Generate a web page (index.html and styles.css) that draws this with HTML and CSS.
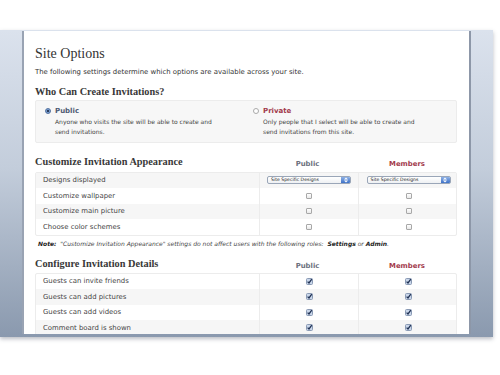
FILE: index.html
```html
<!DOCTYPE html>
<html>
<head>
<meta charset="utf-8">
<link rel="stylesheet" href="styles.css">
</head>
<body>
<div class="window">
  <div class="content">
    <h1 class="title">Site Options</h1>
    <p class="intro">The following settings determine which options are available across your site.</p>

    <h2 class="heading">Who Can Create Invitations?</h2>
    <div class="choice-panel">
      <div class="choice">
        <span class="radio radio-on"></span>
        <div class="choice-body">
          <div class="choice-title t-public">Public</div>
          <p class="choice-desc">Anyone who visits the site will be able to create and<br>send invitations.</p>
        </div>
      </div>
      <div class="choice">
        <span class="radio"></span>
        <div class="choice-body">
          <div class="choice-title t-private">Private</div>
          <p class="choice-desc">Only people that I select will be able to create and<br>send invitations from this site.</p>
        </div>
      </div>
    </div>

    <div class="cols section-head">
      <h2 class="heading">Customize Invitation Appearance</h2>
      <span class="col-head t-public-h">Public</span>
      <span class="col-head t-private">Members</span>
    </div>
    <div class="table table-a">
      <div class="cols row">
        <span class="label">Designs displayed</span>
        <span class="cell"><span class="select"><span class="select-text">Site Specific Designs</span><span class="select-arrow"><svg width="6" height="6" viewBox="0 0 6 6"><path d="M1 2.4 L3 0.6 L5 2.4Z M1 3.6 L3 5.4 L5 3.6Z" fill="#fff"/></svg></span></span></span>
        <span class="cell"><span class="select"><span class="select-text">Site Specific Designs</span><span class="select-arrow"><svg width="6" height="6" viewBox="0 0 6 6"><path d="M1 2.4 L3 0.6 L5 2.4Z M1 3.6 L3 5.4 L5 3.6Z" fill="#fff"/></svg></span></span></span>
      </div>
      <div class="cols row">
        <span class="label">Customize wallpaper</span>
        <span class="cell"><span class="box"></span></span>
        <span class="cell"><span class="box"></span></span>
      </div>
      <div class="cols row">
        <span class="label">Customize main picture</span>
        <span class="cell"><span class="box"></span></span>
        <span class="cell"><span class="box"></span></span>
      </div>
      <div class="cols row">
        <span class="label">Choose color schemes</span>
        <span class="cell"><span class="box"></span></span>
        <span class="cell"><span class="box"></span></span>
      </div>
    </div>
    <p class="note"><b>Note:</b>&nbsp; "Customize Invitation Appearance" settings do not affect users with the following roles:&nbsp; <b>Settings</b> or <b>Admin</b>.</p>

    <div class="cols section-head section-head-b">
      <h2 class="heading">Configure Invitation Details</h2>
      <span class="col-head t-public-h">Public</span>
      <span class="col-head t-private">Members</span>
    </div>
    <div class="table table-b">
      <div class="cols row">
        <span class="label">Guests can invite friends</span>
        <span class="cell"><svg class="check" width="7" height="7" viewBox="0 0 7 7"><rect x="0.5" y="0.5" width="6" height="6" rx="1" fill="#c9d6ea" stroke="#8a9ab4"/><path d="M1.6 3.6 L3 5 L5.8 1.2" fill="none" stroke="#223355" stroke-width="1.3"/></svg></span>
        <span class="cell"><svg class="check" width="7" height="7" viewBox="0 0 7 7"><rect x="0.5" y="0.5" width="6" height="6" rx="1" fill="#c9d6ea" stroke="#8a9ab4"/><path d="M1.6 3.6 L3 5 L5.8 1.2" fill="none" stroke="#223355" stroke-width="1.3"/></svg></span>
      </div>
      <div class="cols row">
        <span class="label">Guests can add pictures</span>
        <span class="cell"><svg class="check" width="7" height="7" viewBox="0 0 7 7"><rect x="0.5" y="0.5" width="6" height="6" rx="1" fill="#c9d6ea" stroke="#8a9ab4"/><path d="M1.6 3.6 L3 5 L5.8 1.2" fill="none" stroke="#223355" stroke-width="1.3"/></svg></span>
        <span class="cell"><svg class="check" width="7" height="7" viewBox="0 0 7 7"><rect x="0.5" y="0.5" width="6" height="6" rx="1" fill="#c9d6ea" stroke="#8a9ab4"/><path d="M1.6 3.6 L3 5 L5.8 1.2" fill="none" stroke="#223355" stroke-width="1.3"/></svg></span>
      </div>
      <div class="cols row">
        <span class="label">Guests can add videos</span>
        <span class="cell"><svg class="check" width="7" height="7" viewBox="0 0 7 7"><rect x="0.5" y="0.5" width="6" height="6" rx="1" fill="#c9d6ea" stroke="#8a9ab4"/><path d="M1.6 3.6 L3 5 L5.8 1.2" fill="none" stroke="#223355" stroke-width="1.3"/></svg></span>
        <span class="cell"><svg class="check" width="7" height="7" viewBox="0 0 7 7"><rect x="0.5" y="0.5" width="6" height="6" rx="1" fill="#c9d6ea" stroke="#8a9ab4"/><path d="M1.6 3.6 L3 5 L5.8 1.2" fill="none" stroke="#223355" stroke-width="1.3"/></svg></span>
      </div>
      <div class="cols row">
        <span class="label">Comment board is shown</span>
        <span class="cell"><svg class="check" width="7" height="7" viewBox="0 0 7 7"><rect x="0.5" y="0.5" width="6" height="6" rx="1" fill="#c9d6ea" stroke="#8a9ab4"/><path d="M1.6 3.6 L3 5 L5.8 1.2" fill="none" stroke="#223355" stroke-width="1.3"/></svg></span>
        <span class="cell"><svg class="check" width="7" height="7" viewBox="0 0 7 7"><rect x="0.5" y="0.5" width="6" height="6" rx="1" fill="#c9d6ea" stroke="#8a9ab4"/><path d="M1.6 3.6 L3 5 L5.8 1.2" fill="none" stroke="#223355" stroke-width="1.3"/></svg></span>
      </div>
    </div>
  </div>
</div>
</body>
</html>
```

FILE: styles.css
```css
* { box-sizing: border-box; }
html, body { margin: 0; padding: 0; background: #fff; }
body {
  width: 500px;
  height: 375px;
  overflow: hidden;
  font-family: "DejaVu Sans", Verdana, sans-serif;
  color: #444;
}
.window {
  margin-top: 30px;
  width: 493px;
  height: 307px;
  padding: 1px 22px 3px 22px;
  background: linear-gradient(#dbe2ed 0%, #c3cddb 45%, #8a99ae 100%);
  box-shadow: 0 2px 4px rgba(60, 70, 90, 0.35);
  display: flex;
}
.content {
  flex: 1;
  background: #fff;
  border-left: 2px solid #99a3b3;
  border-right: 2px solid #8d97a8;
  padding: 16px 12px 0 11px;
  overflow: hidden;
}
.title {
  margin: 0;
  font-family: "Liberation Serif", "Times New Roman", serif;
  font-weight: normal;
  font-size: 14px;
  line-height: 14px;
  color: #333;
}
.intro {
  margin: 7px 0 0;
  font-size: 6.9px;
  line-height: 9px;
  color: #333;
}
.heading {
  margin: 0;
  font-family: "Liberation Serif", "Times New Roman", serif;
  font-weight: bold;
  font-size: 10.3px;
  line-height: 12px;
  color: #383838;
}
.intro + .heading { margin-top: 9px; }
.choice-panel {
  margin-top: 2px;
  height: 43px;
  background: #f7f7f7;
  border: 1px solid #ececec;
  border-radius: 2px;
  display: grid;
  grid-template-columns: 208px 1fr;
  padding: 5px 0 0 9px;
}
.choice { display: flex; gap: 4px; }
.radio {
  margin-top: 2px;
  width: 6px;
  height: 6px;
  border-radius: 50%;
  border: 1px solid #a9a9a9;
  background: #fff;
  flex: none;
}
.radio-on {
  border-color: #4f6f9f;
  background: radial-gradient(circle, #2b3d5c 0 1.2px, #7ea3d6 1.6px);
}
.choice-title {
  font-weight: bold;
  font-size: 7px;
  line-height: 10px;
}
.t-public { color: #4d5a73; }
.t-private { color: #a23a4c; }
.t-public-h { color: #6a6f7c; }
.choice-desc {
  margin: 1px 0 0;
  font-size: 6px;
  line-height: 10px;
  color: #444;
}
.cols {
  display: grid;
  grid-template-columns: 223px 99px 100px;
  align-items: center;
}
.section-head {
  margin-top: 12.5px;
  height: 16px;
  align-items: start;
}
.section-head .heading { margin-top: 0; }
.col-head {
  justify-self: center;
  font-weight: bold;
  font-size: 6.9px;
  line-height: 10px;
  margin-top: 3px;
}
.table {
  border: 1px solid #ececec;
  border-radius: 2px;
}
.row { height: 15.5px; }
.table-a .row:nth-child(odd) { background: #f6f6f6; }
.table-b .row:nth-child(even) { background: #f6f6f6; }
.label {
  padding-left: 7px;
  font-size: 6.9px;
  color: #444;
}
.cell {
  height: 100%;
  border-left: 1px solid #ececec;
  display: flex;
  align-items: center;
  justify-content: center;
}
.select {
  width: 84px;
  height: 8px;
  border: 1px solid #9aa6b8;
  border-radius: 2px;
  background: linear-gradient(#ffffff, #eef0f3);
  display: flex;
  align-items: center;
  justify-content: space-between;
  overflow: hidden;
}
.select-text {
  padding-left: 3px;
  font-size: 4.6px;
  line-height: 6px;
  color: #222;
}
.select-arrow {
  width: 9px;
  height: 100%;
  background: linear-gradient(#8fb2e6, #3d71c7);
  display: flex;
  align-items: center;
  justify-content: center;
}
.box {
  width: 6px;
  height: 6px;
  border: 1px solid #a8a8a8;
  border-radius: 1px;
  background: linear-gradient(#ffffff, #e9e9e9);
}
.check { display: block; }
.note {
  margin: 3px 0 0 3px;
  font-size: 6px;
  line-height: 9px;
  font-style: italic;
  color: #444;
}
.note b { color: #222; }
.section-head-b { margin-top: 10px; height: 15px; }
```
